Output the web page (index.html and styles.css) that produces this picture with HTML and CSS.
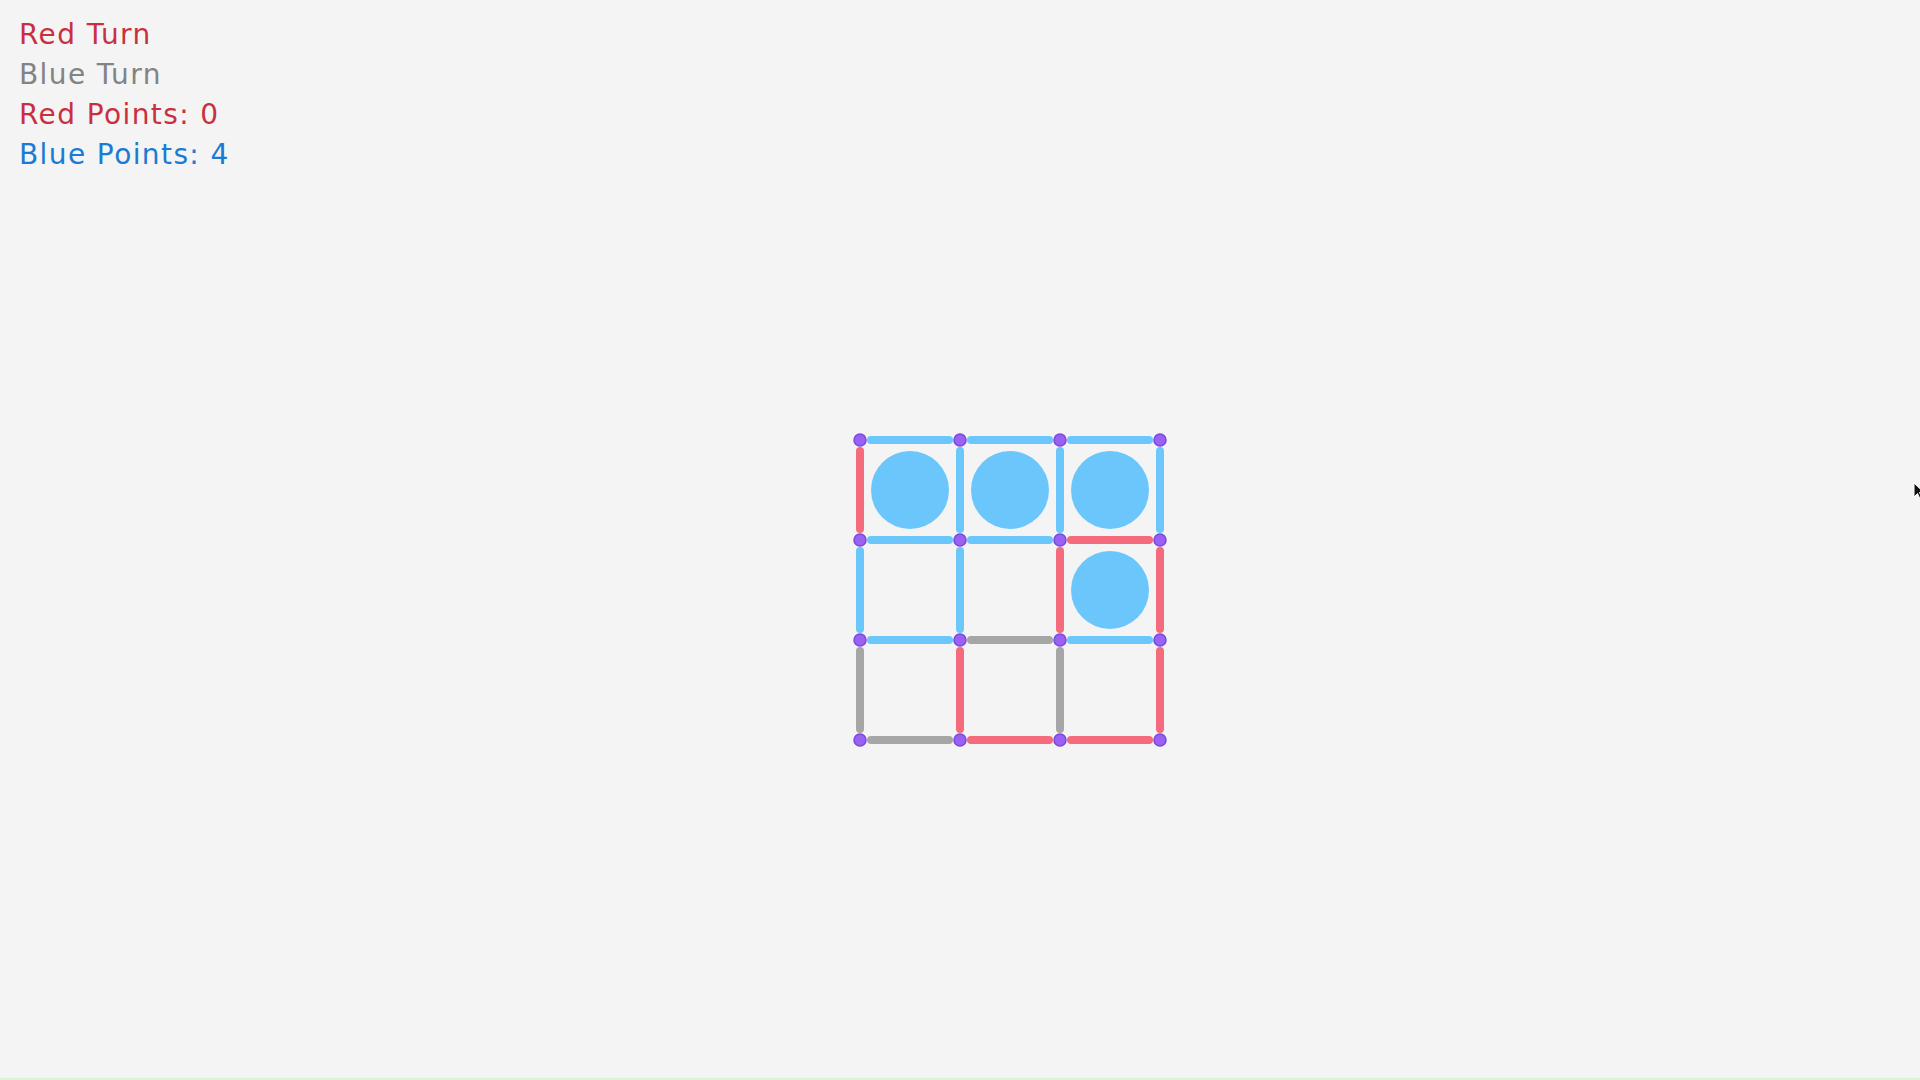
FILE: index.html
```html
<!DOCTYPE html>
<html lang="en">

<head>
    <meta charset="UTF-8">
    <meta name="viewport" content="width=device-width, initial-scale=1.0">
    <title>Dots and Boxes</title>
    <link rel="stylesheet" href="styles.css">
</head>

<body>
    <div class="stats">
        <div class="red-text">Red Turn</div>
        <div class="gray-text">Blue Turn</div>
        <div class="red-text">Red Points: 0</div>
        <div class="blue-text">Blue Points: 4</div>
    </div>

    <div class="board">
        <svg width="316" height="316" viewBox="0 0 316 316">
            <!-- boxes -->
            <circle class="box-blue" cx="58" cy="58" r="39" />
            <circle class="box-blue" cx="158" cy="58" r="39" />
            <circle class="box-blue" cx="258" cy="58" r="39" />
            <circle class="box-blue" cx="258" cy="158" r="39" />

            <!-- horizontal lines -->
            <line class="line blue" x1="19" y1="8" x2="97" y2="8" />
            <line class="line blue" x1="119" y1="8" x2="197" y2="8" />
            <line class="line blue" x1="219" y1="8" x2="297" y2="8" />
            <line class="line blue" x1="19" y1="108" x2="97" y2="108" />
            <line class="line blue" x1="119" y1="108" x2="197" y2="108" />
            <line class="line red" x1="219" y1="108" x2="297" y2="108" />
            <line class="line blue" x1="19" y1="208" x2="97" y2="208" />
            <line class="line gray" x1="119" y1="208" x2="197" y2="208" />
            <line class="line blue" x1="219" y1="208" x2="297" y2="208" />
            <line class="line gray" x1="19" y1="308" x2="97" y2="308" />
            <line class="line red" x1="119" y1="308" x2="197" y2="308" />
            <line class="line red" x1="219" y1="308" x2="297" y2="308" />

            <!-- vertical lines -->
            <line class="line red" x1="8" y1="19" x2="8" y2="97" />
            <line class="line blue" x1="8" y1="119" x2="8" y2="197" />
            <line class="line gray" x1="8" y1="219" x2="8" y2="297" />
            <line class="line blue" x1="108" y1="19" x2="108" y2="97" />
            <line class="line blue" x1="108" y1="119" x2="108" y2="197" />
            <line class="line red" x1="108" y1="219" x2="108" y2="297" />
            <line class="line blue" x1="208" y1="19" x2="208" y2="97" />
            <line class="line red" x1="208" y1="119" x2="208" y2="197" />
            <line class="line gray" x1="208" y1="219" x2="208" y2="297" />
            <line class="line blue" x1="308" y1="19" x2="308" y2="97" />
            <line class="line red" x1="308" y1="119" x2="308" y2="197" />
            <line class="line red" x1="308" y1="219" x2="308" y2="297" />

            <!-- dots -->
            <circle class="dot" cx="8" cy="8" r="6" />
            <circle class="dot" cx="108" cy="8" r="6" />
            <circle class="dot" cx="208" cy="8" r="6" />
            <circle class="dot" cx="308" cy="8" r="6" />
            <circle class="dot" cx="8" cy="108" r="6" />
            <circle class="dot" cx="108" cy="108" r="6" />
            <circle class="dot" cx="208" cy="108" r="6" />
            <circle class="dot" cx="308" cy="108" r="6" />
            <circle class="dot" cx="8" cy="208" r="6" />
            <circle class="dot" cx="108" cy="208" r="6" />
            <circle class="dot" cx="208" cy="208" r="6" />
            <circle class="dot" cx="308" cy="208" r="6" />
            <circle class="dot" cx="8" cy="308" r="6" />
            <circle class="dot" cx="108" cy="308" r="6" />
            <circle class="dot" cx="208" cy="308" r="6" />
            <circle class="dot" cx="308" cy="308" r="6" />
        </svg>
    </div>

    <svg class="cursor" width="12" height="18" viewBox="0 0 12 18">
        <path d="M1 1 L1 15 L4.5 11.5 L7 17 L9 16 L6.5 10.5 L11 10.5 Z" fill="#111" stroke="#fff" stroke-width="1" />
    </svg>
</body>

</html>
```

FILE: styles.css
```css
html,
body {
    margin: 0;
    height: 100%;
}

body {
    background-color: #f4f4f4;
    font-family: "DejaVu Sans", sans-serif;
    border-bottom: 2px solid #d9f5d2;
    box-sizing: border-box;
    overflow: hidden;
}

.stats {
    padding: 15px 20px 0 19px;
    font-size: 28px;
    line-height: 40px;
    letter-spacing: 1.4px;
}

.red-text {
    color: #c9303f;
}

.gray-text {
    color: #838383;
}

.blue-text {
    color: #1a7bd4;
}

.board {
    margin: 257px 0 0 852px;
}

.board svg {
    display: block;
}

.box-blue {
    fill: #6bc6fb;
}

.line {
    stroke-width: 8;
    stroke-linecap: round;
}

.blue {
    stroke: #6bc6fb;
}

.red {
    stroke: #f36b7c;
}

.gray {
    stroke: #a6a6a6;
}

.dot {
    fill: #9a62f2;
    stroke: #7a46e2;
    stroke-width: 1.5;
}

.cursor {
    position: absolute;
    left: 1913px;
    top: 482px;
}
```
